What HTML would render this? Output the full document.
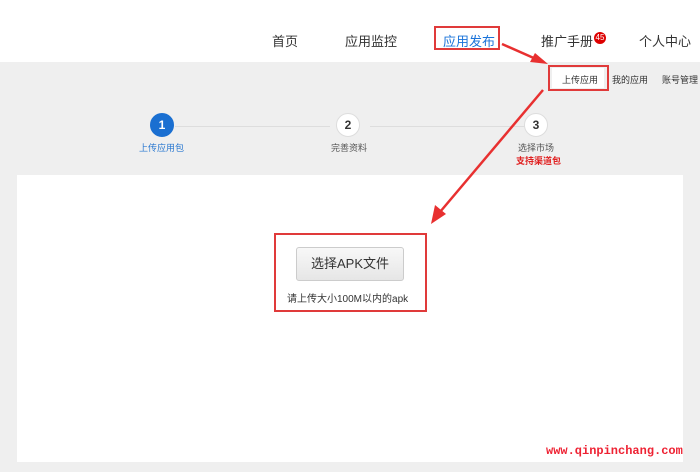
<!DOCTYPE html>
<html><head><meta charset="utf-8"><style>
*{margin:0;padding:0;box-sizing:border-box}
body{width:700px;height:472px;overflow:hidden;background:#efefef;font-family:"Liberation Sans","Noto Sans CJK SC",sans-serif;position:relative}
.hdr{position:absolute;left:0;top:0;width:700px;height:62px;background:#fff}
.nav{position:absolute;top:31px;font-size:13px;color:#333;white-space:nowrap}
.abs{position:absolute}
.panel{position:absolute;left:17px;top:175px;width:666px;height:287px;background:#fff}
.circ{position:absolute;width:24px;height:24px;border-radius:50%;background:#fff;border:1px solid #ddd;font-size:12px;font-weight:bold;text-align:center;line-height:22px;color:#333}
.lbl{position:absolute;font-size:9px;color:#555;white-space:nowrap}
</style></head><body>
<div class="hdr"></div>
<div class="nav" style="left:272px">首页</div>
<div class="nav" style="left:345px">应用监控</div>
<div class="nav" style="left:443px;color:#1a73d9">应用发布</div>
<div class="abs" style="left:434px;top:26px;width:66px;height:24px;border:2px solid #e03a3a"></div>
<div class="nav" style="left:541px">推广手册</div>
<div class="abs" style="left:594px;top:32px;width:12px;height:12px;border-radius:50%;background:#d00;color:#fff;font-size:8px;text-align:center;line-height:12px">45</div>
<div class="nav" style="left:639px">个人中心</div>

<div class="abs" style="left:552px;top:68px;width:52px;height:20px;background:#fff"></div>
<div class="abs" style="left:548px;top:65px;width:61px;height:26px;border:2px solid #e03a3a"></div>
<div class="lbl" style="left:562px;top:73px;color:#333">上传应用</div>
<div class="lbl" style="left:612px;top:73px;color:#333">我的应用</div>
<div class="lbl" style="left:662px;top:73px;color:#333">账号管理</div>

<div class="abs" style="left:175px;top:126px;width:155px;height:1px;background:#ddd"></div>
<div class="abs" style="left:370px;top:126px;width:155px;height:1px;background:#ddd"></div>
<div class="circ" style="left:150px;top:113px;background:#1a6fd1;border-color:#1a6fd1;color:#fff">1</div>
<div class="circ" style="left:336px;top:113px">2</div>
<div class="circ" style="left:524px;top:113px">3</div>
<div class="lbl" style="left:139px;top:141px;color:#2a78d0">上传应用包</div>
<div class="lbl" style="left:331px;top:141px">完善资料</div>
<div class="lbl" style="left:518px;top:141px">选择市场</div>
<div class="lbl" style="left:516px;top:154px;color:#e02020;font-weight:bold">支持渠道包</div>

<div class="panel"></div>
<div class="abs" style="left:274px;top:233px;width:153px;height:79px;border:2px solid #e03a3a"></div>
<div class="abs" style="left:296px;top:247px;width:108px;height:34px;border:1px solid #ccc;border-radius:3px;background:linear-gradient(#f8f8f8,#e6e6e6);font-size:13px;color:#333;text-align:center;line-height:32px">选择APK文件</div>
<div class="abs" style="left:287px;top:290px;font-size:10px;color:#333;white-space:nowrap">请上传大小100M以内的apk</div>

<div class="abs" style="left:546px;top:444px;font-family:'Liberation Mono',monospace;font-size:12px;font-weight:bold;color:#ee2233;white-space:nowrap">www.qinpinchang.com</div>

<svg class="abs" style="left:0;top:0" width="700" height="472">
<g fill="#e83030" stroke="#e83030">
<line x1="502" y1="44" x2="536" y2="59" stroke-width="2.5"/>
<polygon points="548,64 530,62 535,53" stroke="none"/>
<line x1="543" y1="90" x2="440" y2="212" stroke-width="2.5"/>
<polygon points="431,224 435,205 446,214" stroke="none"/>
</g>
</svg>
</body></html>
